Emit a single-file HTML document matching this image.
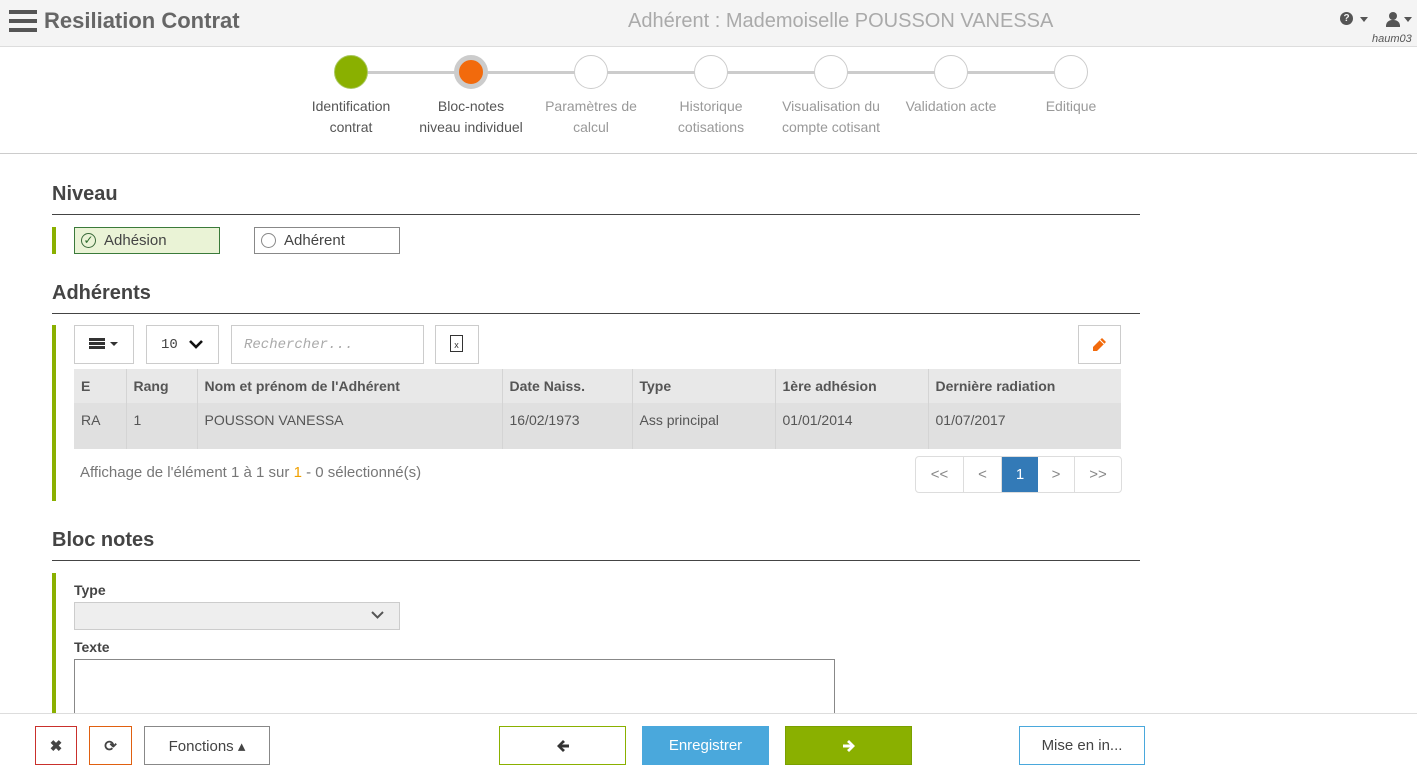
<!DOCTYPE html>
<html><head><meta charset="utf-8"><style>
*{box-sizing:border-box;margin:0;padding:0}
body{width:1417px;height:767px;overflow:hidden;background:#fff;font-family:"Liberation Sans",sans-serif;color:#555;position:relative}
.a{position:absolute}
.hdr{left:0;top:0;width:1417px;height:47px;background:#f4f4f4;border-bottom:1px solid #ddd}
.step{position:absolute;top:55px;width:34px;height:34px;border-radius:50%;border:1px solid #ccc;background:#fff}
.lbl{position:absolute;top:96px;width:130px;text-align:center;font-size:14px;line-height:21px;color:#999}
h2{position:absolute;left:52px;font-size:20px;font-weight:bold;color:#444}
.hl{position:absolute;left:52px;width:1088px;height:1px;background:#444}
.gb{position:absolute;left:52px;width:4px;background:#8ab000}
.box{position:absolute;border:1px solid #ccc;background:#fff}
th,td{text-align:left;font-size:14px;padding:0 7px;border-right:1px solid #d4d4d4}
th{height:34px;background:#e8e8e8;color:#555}
td{height:46px;background:#e0e0e0;vertical-align:top;padding-top:9px;color:#555}
.btn{position:absolute;top:726px;height:39px;border:1px solid;font-size:15px;display:flex;align-items:center;justify-content:center;color:#444;background:#fff}
</style></head><body>
<div class="a hdr"></div>
<div class="a" style="left:9px;top:10px;width:28px;height:4px;background:#555;box-shadow:0 9px 0 #555,0 18px 0 #555"></div>
<div class="a" style="left:44px;top:8px;font-size:22px;font-weight:bold;color:#666">Resiliation Contrat</div>
<div class="a" style="left:628px;top:10px;font-size:20px;color:#aaa">Adhérent : Mademoiselle POUSSON VANESSA</div>
<div class="a" style="left:1340px;top:12px;width:13px;height:13px;border-radius:50%;background:#555;color:#f4f4f4;font-size:10px;font-weight:bold;text-align:center;line-height:13px">?</div>
<div class="a" style="left:1360px;top:17px;border:4px solid transparent;border-top:5px solid #555"></div>
<div class="a" style="left:1389px;top:12px;width:8px;height:8px;border-radius:50%;background:#555"></div>
<div class="a" style="left:1386px;top:20px;width:14px;height:7px;border-radius:6px 6px 0 0;background:#555"></div>
<div class="a" style="left:1404px;top:17px;border:4px solid transparent;border-top:5px solid #555"></div>
<div class="a" style="left:1372px;top:33px;font-size:11px;font-style:italic;color:#555">haum03</div>

<div class="a" style="left:351px;top:71px;width:720px;height:3px;background:#ccc"></div>
<div class="step" style="left:334px;background:#8ab000;border-color:#a9c860"></div>
<div class="step" style="left:454px;background:#f26a0c;border:5px solid #ccc"></div>
<div class="step" style="left:574px"></div>
<div class="step" style="left:694px"></div>
<div class="step" style="left:814px"></div>
<div class="step" style="left:934px"></div>
<div class="step" style="left:1054px"></div>
<div class="lbl" style="left:286px;color:#555">Identification<br>contrat</div>
<div class="lbl" style="left:406px;color:#555">Bloc-notes<br>niveau individuel</div>
<div class="lbl" style="left:526px">Paramètres de<br>calcul</div>
<div class="lbl" style="left:646px">Historique<br>cotisations</div>
<div class="lbl" style="left:766px">Visualisation du<br>compte cotisant</div>
<div class="lbl" style="left:886px">Validation acte</div>
<div class="lbl" style="left:1006px">Editique</div>
<div class="a" style="left:0;top:153px;width:1417px;height:1px;background:#ccc"></div>

<h2 style="top:183px">Niveau</h2><div class="hl" style="top:214px"></div>
<div class="gb" style="top:227px;height:27px"></div>
<div class="a" style="left:74px;top:227px;width:146px;height:27px;background:#eaf3d6;border:1px solid #3a7a3a;font-size:15px;color:#444;padding:4px 0 0 29px">Adhésion</div>
<div class="a" style="left:81px;top:233px;width:15px;height:15px;border-radius:50%;border:1px solid #3a6a3a;color:#2a6a2a;font-size:12px;line-height:13px;text-align:center">✓</div>
<div class="a" style="left:254px;top:227px;width:146px;height:27px;border:1px solid #888;font-size:15px;color:#444;padding:4px 0 0 29px">Adhérent</div>
<div class="a" style="left:261px;top:233px;width:15px;height:15px;border-radius:50%;border:1px solid #888"></div>

<h2 style="top:282px">Adhérents</h2><div class="hl" style="top:313px"></div>
<div class="gb" style="top:325px;height:176px"></div>
<div class="box" style="left:74px;top:325px;width:60px;height:39px"></div>
<div class="a" style="left:89px;top:338px;width:16px;height:3px;background:#333;box-shadow:0 4px 0 #333,0 8px 0 #333"></div>
<div class="a" style="left:110px;top:342px;border:4px solid transparent;border-top:4px solid #333"></div>
<div class="box" style="left:146px;top:325px;width:73px;height:39px;font-family:'Liberation Mono',monospace;font-size:14px;padding:11px 0 0 14px;color:#444">10</div>
<svg class="a" style="left:188px;top:338px" width="16" height="12" viewBox="0 0 16 12"><path d="M2 3 L8 9 L14 3" fill="none" stroke="#111" stroke-width="2.6"/></svg>
<div class="box" style="left:231px;top:325px;width:193px;height:39px;font-family:'Liberation Mono',monospace;font-style:italic;font-size:14px;color:#aaa;padding:11px 0 0 12px">Rechercher...</div>
<div class="box" style="left:435px;top:325px;width:44px;height:39px"></div>
<div class="a" style="left:450px;top:335px;width:13px;height:17px;border:1px solid #333;font-size:9px;text-align:center;line-height:18px;color:#333">x</div>
<div class="box" style="left:1078px;top:325px;width:43px;height:39px"></div>
<svg class="a" style="left:1092px;top:337px" width="15" height="15" viewBox="0 0 15 15"><path d="M10 1 L14 5 L5 14 L1 14 L1 10 Z" fill="#f26a0c"/><path d="M8 3 L12 7" stroke="#fff" stroke-width="1"/></svg>
<table class="a" style="left:74px;top:369px;width:1047px;border-collapse:collapse">
<tr><th style="width:52px">E</th><th style="width:71px">Rang</th><th style="width:305px">Nom et prénom de l'Adhérent</th><th style="width:130px">Date Naiss.</th><th style="width:143px">Type</th><th style="width:153px">1ère adhésion</th><th style="border:0">Dernière radiation</th></tr>
<tr><td>RA</td><td>1</td><td>POUSSON VANESSA</td><td>16/02/1973</td><td>Ass principal</td><td>01/01/2014</td><td style="border:0">01/07/2017</td></tr>
</table>
<div class="a" style="left:80px;top:464px;font-size:15px;color:#777">Affichage de l'élément 1 à 1 sur <b style="color:#f0a000;font-weight:normal">1</b> - 0 sélectionné(s)</div>
<div class="a" style="left:915px;top:456px;width:207px;height:37px;border:1px solid #ddd;border-radius:4px;display:flex;font-size:15px;color:#888;overflow:hidden">
<div style="width:48px;border-right:1px solid #ddd;text-align:center;line-height:35px">&lt;&lt;</div>
<div style="width:38px;border-right:1px solid #ddd;text-align:center;line-height:35px">&lt;</div>
<div style="width:36px;background:#337ab7;color:#fff;text-align:center;line-height:35px">1</div>
<div style="width:37px;border-right:1px solid #ddd;text-align:center;line-height:35px">&gt;</div>
<div style="flex:1;text-align:center;line-height:35px">&gt;&gt;</div></div>

<h2 style="top:529px">Bloc notes</h2><div class="hl" style="top:560px"></div>
<div class="gb" style="top:573px;height:140px"></div>
<div class="a" style="left:74px;top:582px;font-size:14px;font-weight:bold;color:#444">Type</div>
<div class="a" style="left:74px;top:602px;width:326px;height:28px;background:#eee;border:1px solid #ccc"></div>
<svg class="a" style="left:370px;top:609px" width="15" height="11" viewBox="0 0 15 11"><path d="M2 3 L7.5 8.5 L13 3" fill="none" stroke="#555" stroke-width="2"/></svg>
<div class="a" style="left:74px;top:639px;font-size:14px;font-weight:bold;color:#444">Texte</div>
<div class="a" style="left:74px;top:659px;width:761px;height:60px;border:1px solid #888"></div>

<div class="a" style="left:0;top:713px;width:1417px;height:54px;background:#fff;border-top:1px solid #ddd"></div>
<div class="btn" style="left:35px;width:42px;border-color:#c9302c;font-weight:bold">✖</div>
<div class="btn" style="left:89px;width:43px;border-color:#e06010;font-weight:bold">⟳</div>
<div class="btn" style="left:144px;width:126px;border-color:#888">Fonctions ▴</div>
<div class="btn" style="left:499px;width:127px;border-color:#8ab000"><svg width="14" height="14" viewBox="0 0 14 14"><path d="M1 7 L7 1 L9 3 L6 5.5 L13 5.5 L13 8.5 L6 8.5 L9 11 L7 13 Z" fill="#333"/></svg></div>
<div class="btn" style="left:642px;width:127px;border-color:#4aa8dc;background:#4aa8dc;color:#fff">Enregistrer</div>
<div class="btn" style="left:785px;width:127px;border-color:#7aa000;background:#8ab000"><svg width="14" height="14" viewBox="0 0 14 14"><path d="M13 7 L7 1 L5 3 L8 5.5 L1 5.5 L1 8.5 L8 8.5 L5 11 L7 13 Z" fill="#fff"/></svg></div>
<div class="btn" style="left:1019px;width:126px;border-color:#4aa8dc">Mise en in...</div>
</body></html>
